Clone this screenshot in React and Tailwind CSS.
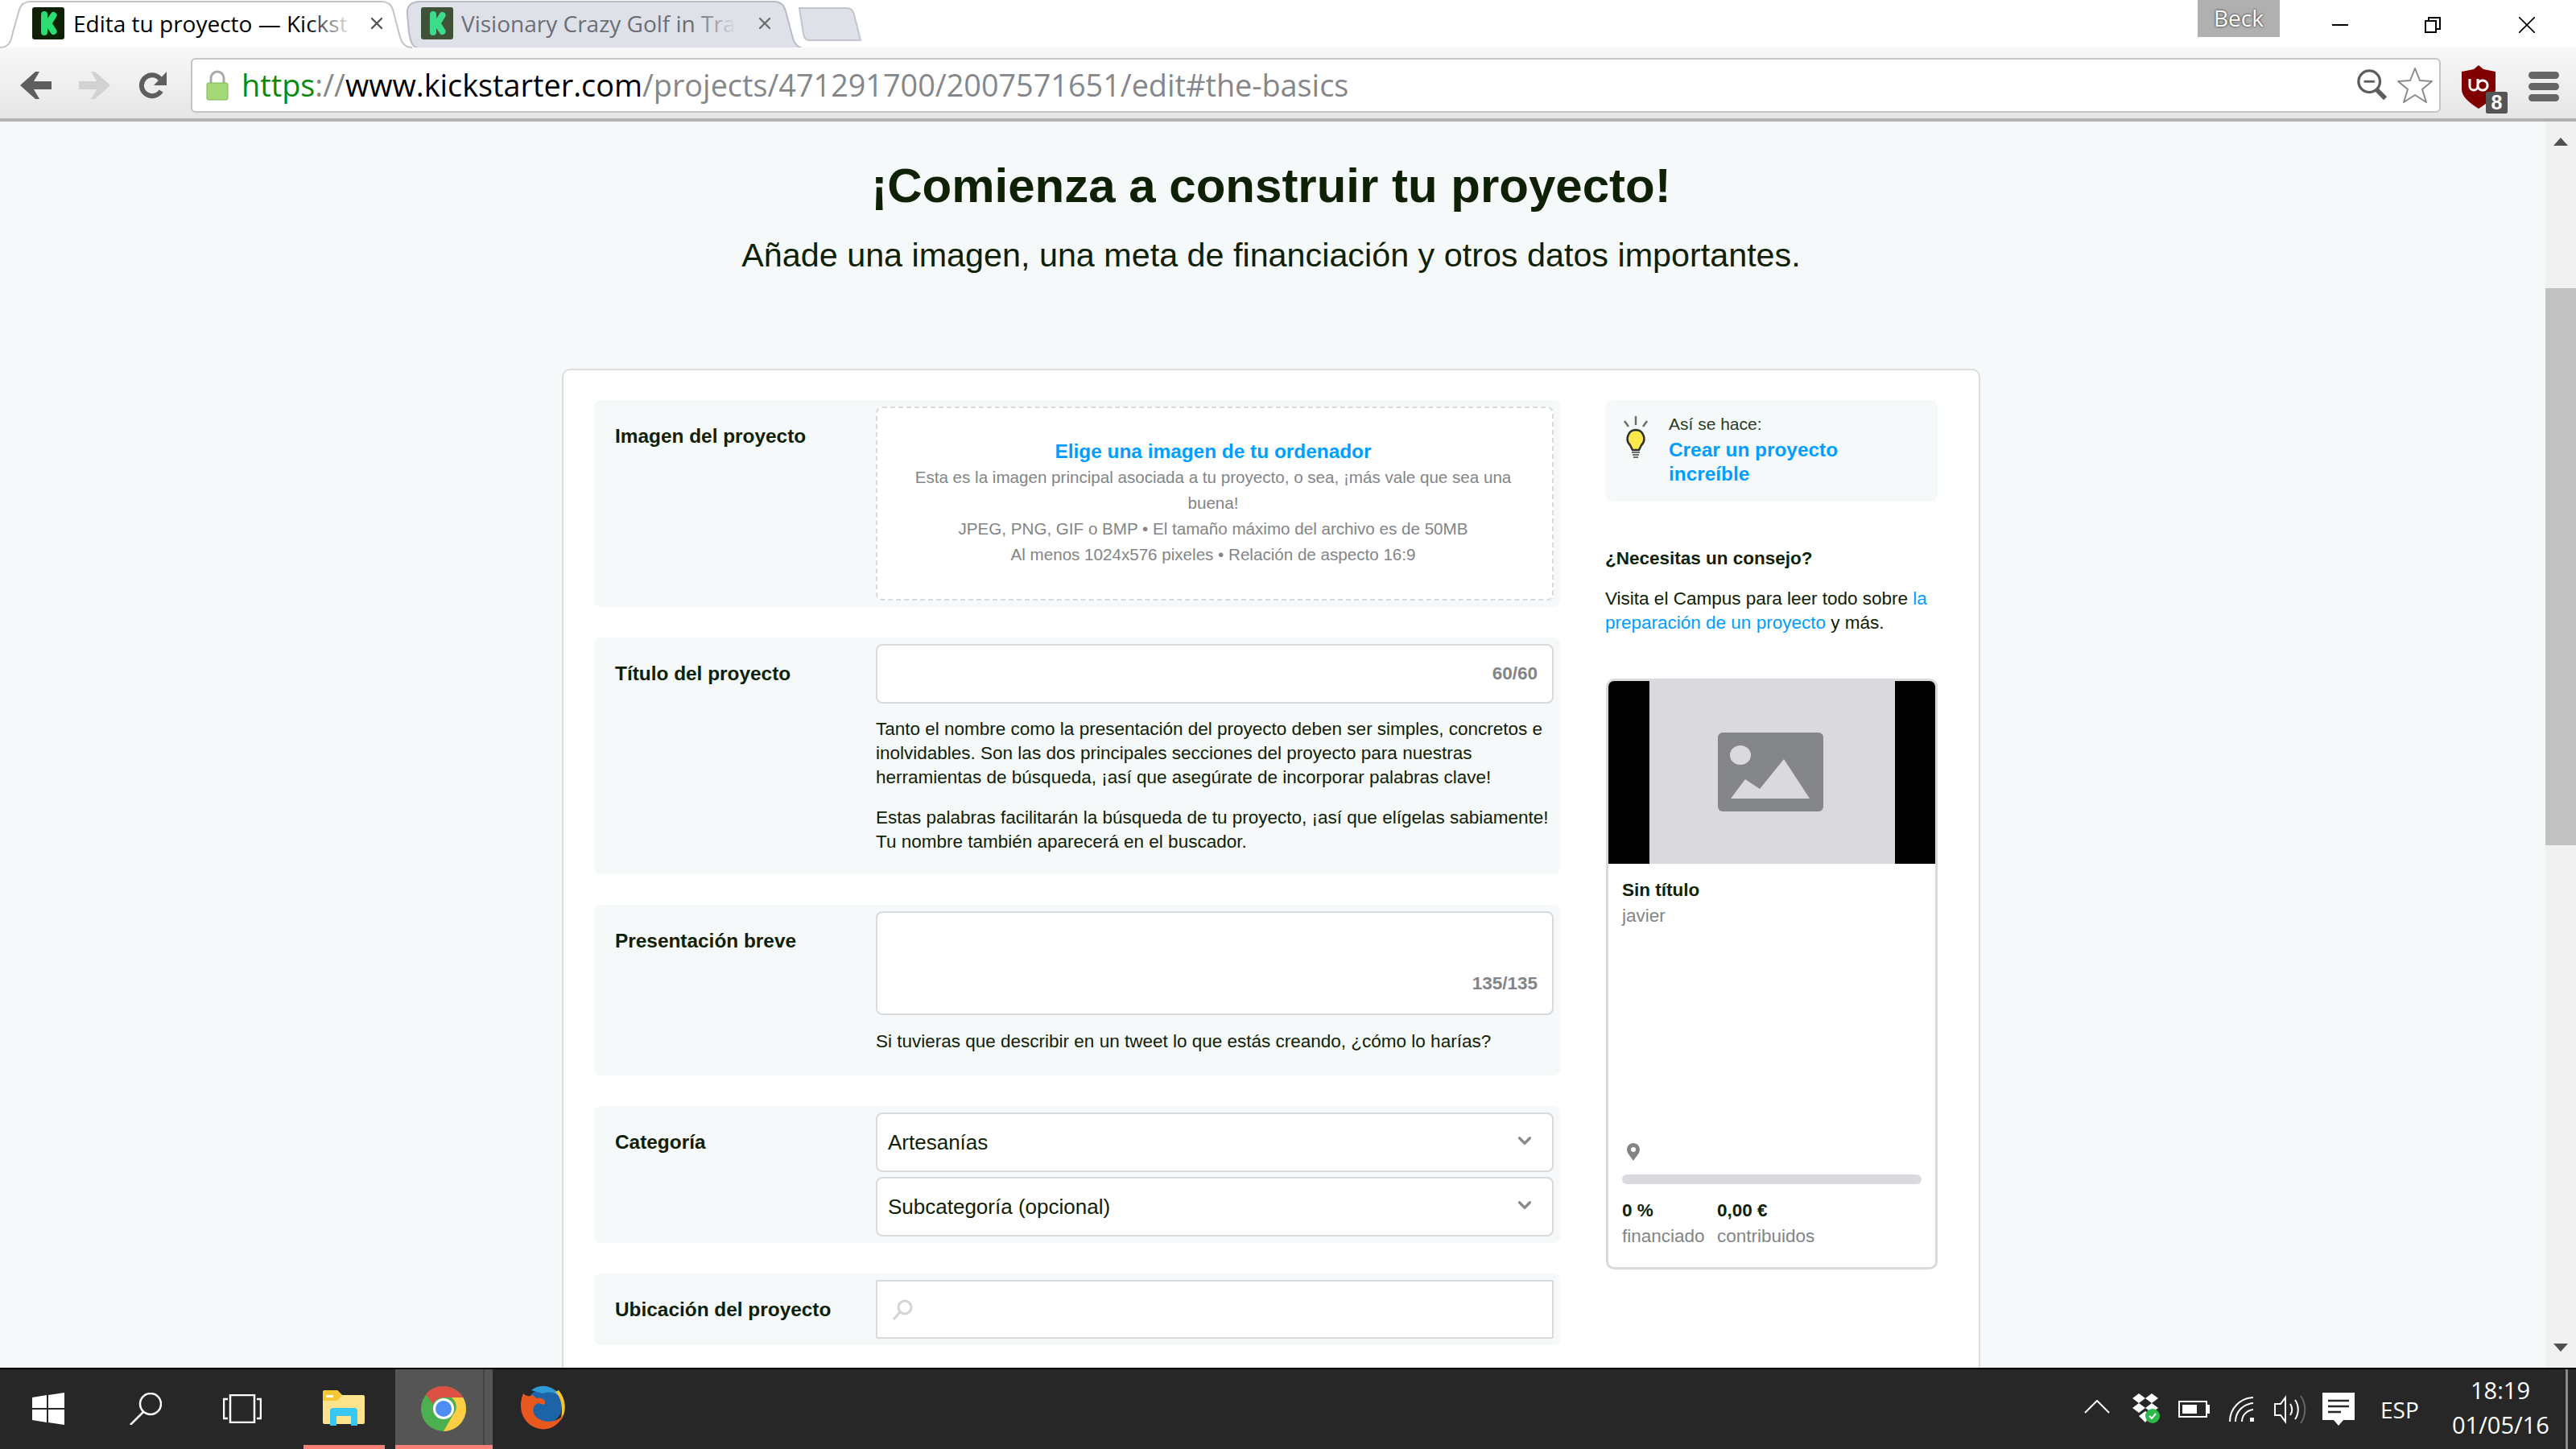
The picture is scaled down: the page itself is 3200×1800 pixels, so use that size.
import { ChevronDown, X } from 'lucide-react'

const INK = 'text-[#0f2105]'

function KLogo({ dim }) {
  return (
    <svg viewBox="0 0 40 40" className="w-10 h-10 shrink-0">
      <rect width="40" height="40" rx="3" fill={dim ? '#3f5238' : '#0f2105'} />
      <path d="M11 9 a4 4 0 0 1 8 0 v5 l4-6 a4 4 0 0 1 7 4 l-5 8 5 8 a4 4 0 0 1-7 4 l-4-6 v5 a4 4 0 0 1-8 0z" fill={dim ? '#3ddc8c' : '#2bde73'} />
    </svg>
  )
}

function TabBar() {
  return (
    <div className="flex h-[60px] shrink-0 bg-white relative">
      <div className="relative w-[512px] h-[60px] shrink-0 z-10">
        <svg viewBox="0 0 512 60" className="absolute inset-0 w-full h-full">
          <path d="M0 59 C12 59 14 50 16 40 L24 12 C26 5 30 2 38 2 L474 2 C482 2 486 5 488 12 L497 46 C499 54 503 59 512 59" fill="#fff" stroke="#c4c4c4" strokeWidth="2" />
        </svg>
        <div className="relative flex items-center h-full pl-10 pb-[2px]">
          <KLogo />
          <div className="relative ml-[11px] w-[348px] overflow-hidden whitespace-nowrap font-['Open_Sans',sans-serif] text-[28px] leading-[40px] text-black">
            Edita tu proyecto — Kickst
            <div className="absolute right-0 top-0 h-full w-[60px] bg-gradient-to-r from-transparent to-white" />
          </div>
          <X className="ml-[17px] text-[#555]" size={24} strokeWidth={2.4} />
        </div>
      </div>
      <div className="relative w-[494px] h-[60px] -ml-[8px] shrink-0">
        <svg viewBox="0 0 494 60" className="absolute inset-0 w-full h-full">
          <path d="M18 60 C8 60 6 52 4 40 L2 18 C1 8 6 2 18 2 L458 2 C466 2 470 6 472 14 L480 44 C482 54 486 59 494 60 Z" fill="#dee1e8" stroke="#b8bcc6" strokeWidth="2" />
        </svg>
        <div className="relative flex items-center h-full pl-[19px] pb-[2px]">
          <KLogo dim />
          <div className="relative ml-[10px] w-[342px] overflow-hidden whitespace-nowrap font-['Open_Sans',sans-serif] text-[28px] leading-[40px] text-[#6b6e75]">
            Visionary Crazy Golf in Tra
            <div className="absolute right-0 top-0 h-full w-[50px] bg-gradient-to-r from-transparent to-[#dee1e8]" />
          </div>
          <X className="ml-[23px] text-[#6d6d6d]" size={24} strokeWidth={2.4} />
        </div>
      </div>
      <svg viewBox="0 0 80 44" className="w-[80px] h-[44px] mt-[8px] -ml-[7px]">
        <path d="M2 2 L60 2 C66 2 68 4 70 10 L78 42 L14 42 C10 42 8 40 7 34z" fill="#dee1e8" stroke="#c2c5cd" strokeWidth="2" />
      </svg>
      <div className="flex-1" />
      <div className="w-[102px] h-[46px] pb-[3px] bg-[#b0b0b0] flex items-center justify-center text-white font-['Open_Sans',sans-serif] font-medium text-[28px] [text-shadow:0_0_3px_#111]">Beck</div>
      <div className="w-[368px] flex items-start pt-[21px] pl-[65px]">
        <div className="w-5 h-5 flex items-center"><div className="w-5 h-[2px] bg-black" /></div>
        <svg viewBox="0 0 20 20" className="w-5 h-5 ml-[95px]" fill="none" stroke="#000" strokeWidth="2">
          <rect x="1" y="5" width="13" height="14" />
          <path d="M5 5 V1 H19 V15 H14" />
        </svg>
        <svg viewBox="0 0 20 20" className="w-5 h-5 ml-[97px]" fill="none" stroke="#000" strokeWidth="1.6">
          <path d="M0 0 L20 20 M20 0 L0 20" />
        </svg>
      </div>
    </div>
  )
}

function Toolbar() {
  return (
    <div className="h-[92px] shrink-0 flex items-center pt-[5px] bg-gradient-to-b from-[#f8f8f8] to-[#e6e6e6] border-b-[4px] border-[#b2b2b2] -mt-[1px] relative">
      <svg viewBox="0 0 40 36" className="w-10 h-9 ml-[25px]" fill="#5e5e5e">
        <path d="M19 1 L0 18 19 35 24 35 17 23 H39 V13 H17 L24 1z" />
      </svg>
      <svg viewBox="0 0 40 36" className="w-10 h-9 ml-[32px]" fill="#d2d2d2">
        <path d="M21 1 L40 18 21 35 16 35 23 23 H1 V13 H23 L16 1z" />
      </svg>
      <svg viewBox="0 0 36 34" className="w-9 h-[34px] ml-[35px]" fill="none">
        <path d="M28 24 A13 13 0 1 1 27 9" stroke="#5e5e5e" strokeWidth="6" />
        <path d="M35 0 V17 H19z" fill="#5e5e5e" />
      </svg>
      <div className="ml-[29px] w-[796px] flex-1 h-[68px] mr-[168px] bg-white border-2 border-[#c4c4c4] rounded-[6px] flex items-center">
        <svg viewBox="0 0 28 38" className="w-7 h-[38px] ml-[17px] shrink-0">
          <path d="M6 17 V10 a8 8 0 0 1 16 0 V17" fill="none" stroke="#a9a9a9" strokeWidth="3" />
          <rect x="1" y="16" width="26" height="21" rx="2" fill="#a5d978" stroke="#7fb553" />
        </svg>
        <div className="ml-[16px] whitespace-nowrap font-['Open_Sans',sans-serif] text-[37.8px] leading-[50px] text-[#85878a]">
          <span className="text-[#0a8a0a]">https</span>://<span className="text-black">www.kickstarter.com</span>/projects/471291700/2007571651/edit#the-basics
        </div>
        <div className="flex-1" />
        <svg viewBox="0 0 40 42" className="w-[38px] h-10 mr-[11px]" fill="none" stroke="#5d5d5d">
          <circle cx="16" cy="16" r="14" strokeWidth="3.5" />
          <path d="M9 16 H23" strokeWidth="3" />
          <path d="M26 27 L37 38" strokeWidth="6" />
        </svg>
        <svg viewBox="0 0 46 46" className="w-[46px] h-[46px] mr-[7px]" fill="#fff" stroke="#8a8a8a" strokeWidth="2">
          <path d="M23 2 L29 17 44 18 32 28 37 44 23 35 9 44 14 28 2 18 17 17z" strokeLinejoin="round" />
        </svg>
      </div>
      <div className="absolute left-[3058px] top-[22px] w-[58px] h-[60px]">
        <svg viewBox="0 0 42 54" className="w-[42px] h-[54px]">
          <path d="M21 0 L27 5 L42 8 V30 C42 40 30 48 21 54 C12 48 0 40 0 30 V8 L15 5z" fill="#800000" />
          <path d="M10 17 V26 a5 5 0 0 0 10 0 V17 M20 26 a6 6 0 1 0 12 -2 a6 6 0 1 0 -12 2" fill="none" stroke="#fff" strokeWidth="3" />
        </svg>
        <div className="absolute left-[30px] top-[33px] w-[27px] h-[27px] rounded-[2px] bg-[#555] text-white font-['Liberation_Sans',sans-serif] font-bold text-[25px] leading-[27px] text-center">8</div>
      </div>
      <div className="absolute left-[3141px] top-[30px] w-[38px] flex flex-col gap-[5px]">
        <div className="h-[9px] rounded-full bg-[#666]" />
        <div className="h-[9px] rounded-full bg-[#666]" />
        <div className="h-[9px] rounded-full bg-[#666]" />
      </div>
    </div>
  )
}

function Row({ label, children }) {
  return (
    <div className="flex bg-[#f6f9fa] rounded-[8px]">
      <div className={`w-[350px] shrink-0 pl-[26px] pt-[30px] font-bold text-[24.4px] leading-[30px] ${INK}`}>{label}</div>
      <div className="w-[842px] pt-2 pb-2">{children}</div>
    </div>
  )
}

function Box({ className, children }) {
  return (
    <div className={`bg-white border-2 border-[#d9d9de] rounded-[8px] ${className}`}>{children}</div>
  )
}

function Form() {
  return (
    <div className="w-[1200px] shrink-0 flex flex-col gap-[38px]">
      <Row label="Imagen del proyecto">
        <div className="h-[241px] bg-white border-2 border-dashed border-[#d9d9de] rounded-[8px] flex flex-col justify-center items-center text-center pl-[38px] pr-[42px] pb-[1px]">
          <div className="font-bold text-[24.4px] leading-[32px] text-[#009eff]">Elige una imagen de tu ordenador</div>
          <div className="text-[20.6px] leading-[32px] text-[#828587]">
            <p>Esta es la imagen principal asociada a tu proyecto, o sea, ¡más vale que sea una buena!</p>
            <p>JPEG, PNG, GIF o BMP • El tamaño máximo del archivo es de 50MB</p>
            <p>Al menos 1024x576 pixeles • Relación de aspecto 16:9</p>
          </div>
        </div>
      </Row>
      <Row label="Título del proyecto">
        <Box className="h-[74px] flex items-center justify-end pr-[18px]">
          <span className="font-bold text-[22.5px] text-[#828587]">60/60</span>
        </Box>
        <div className={`mt-[17px] pb-[17px] text-[22.5px] leading-[30px] ${INK}`}>
          <p>Tanto el nombre como la presentación del proyecto deben ser simples, concretos e inolvidables. Son las dos principales secciones del proyecto para nuestras herramientas de búsqueda, ¡así que asegúrate de incorporar palabras clave!</p>
          <p className="mt-[20px]">Estas palabras facilitarán la búsqueda de tu proyecto, ¡así que elígelas sabiamente! Tu nombre también aparecerá en el buscador.</p>
        </div>
      </Row>
      <Row label="Presentación breve">
        <Box className="h-[129px] flex items-end justify-end pr-[18px] pb-[22px]">
          <span className="font-bold text-[22.5px] leading-[30px] text-[#828587]">135/135</span>
        </Box>
        <div className={`mt-[18px] pb-[19px] text-[22.5px] leading-[30px] ${INK}`}>Si tuvieras que describir en un tweet lo que estás creando, ¿cómo lo harías?</div>
      </Row>
      <Row label="Categoría">
        <Box className="h-[74px] flex items-center justify-between pl-[13px] pr-[21px]">
          <span className={`text-[26px] ${INK}`}>Artesanías</span>
          <ChevronDown className="text-[#8b8b8b] -mt-[4px]" size={26} strokeWidth={3} />
        </Box>
        <Box className="h-[74px] mt-[6px] flex items-center justify-between pl-[13px] pr-[21px]">
          <span className={`text-[26px] ${INK}`}>Subcategoría (opcional)</span>
          <ChevronDown className="text-[#8b8b8b] -mt-[4px]" size={26} strokeWidth={3} />
        </Box>
      </Row>
      <Row label="Ubicación del proyecto">
        <div className="h-[73px] bg-white border-2 border-[#d9d9de] rounded-[2px] flex items-center pl-[18px]">
          <svg viewBox="0 0 26 26" className="w-[26px] h-[26px]" fill="none" stroke="#d4d4d8" strokeWidth="3">
            <circle cx="16" cy="10" r="8" />
            <path d="M10 16 L2 25" />
          </svg>
        </div>
      </Row>
    </div>
  )
}

function Bulb() {
  return (
    <svg viewBox="0 0 32 52" className="w-8 h-[52px] shrink-0 mt-[20px] ml-[21px]">
      <path d="M16 0 V11 M2 6 L7 13 M30 6 L25 13" stroke="#6e6e6e" strokeWidth="2.5" fill="none" />
      <path d="M16 17 a10.5 11 0 0 0 -7 19 l3 6 h8 l3 -6 a10.5 11 0 0 0 -7 -19z" fill="#fbe84a" stroke="#2f2f2f" strokeWidth="2.5" />
      <path d="M11 45 H21 M12 48 H20 M13 51 H19" stroke="#6e6e6e" strokeWidth="2" />
    </svg>
  )
}

function PreviewCard() {
  return (
    <div className="mt-[54px] h-[734px] border-[3px] border-[#d9d9de] rounded-[10px] flex flex-col overflow-hidden">
      <div className="h-[227px] shrink-0 bg-black flex justify-center">
        <div className="w-[305px] bg-[#d9d9de] flex items-center justify-center pb-[2px] pr-[4px]">
          <svg viewBox="0 0 131 98" className="w-[131px] h-[98px]">
            <rect width="131" height="98" rx="6" fill="#85868a" />
            <ellipse cx="28" cy="28" rx="13" ry="12" fill="#d9d9de" />
            <path d="M16 82 L34 58 52 70 82 33 114 82z" fill="#d9d9de" />
          </svg>
        </div>
      </div>
      <div className="flex-1 flex flex-col px-[17px]">
        <div className={`mt-[18px] font-bold text-[22.5px] leading-[30px] ${INK}`}>Sin título</div>
        <div className="mt-[2px] text-[22.5px] leading-[30px] text-[#828587]">javier</div>
        <svg viewBox="0 0 16 22" className="w-4 h-[22px] mt-[267px] ml-[6px]" fill="#828587">
          <path fillRule="evenodd" d="M8 0 a8 8 0 0 1 8 8 c0 5 -5 9 -8 14 c-3 -5 -8 -9 -8 -14 a8 8 0 0 1 8 -8z M8 5 a3 3 0 1 0 0 6 a3 3 0 1 0 0 -6z" />
        </svg>
        <div className="mt-[17px] h-3 rounded-full bg-[#d9d9de]" />
        <div className="mt-[18px] flex gap-[16px] text-[22.5px] leading-[30px]">
          <div className="w-[102px]">
            <div className={`font-bold ${INK}`}>0 %</div>
            <div className="mt-[2px] whitespace-nowrap text-[#828587]">financiado</div>
          </div>
          <div>
            <div className={`font-bold ${INK}`}>0,00 €</div>
            <div className="mt-[2px] text-[#828587]">contribuidos</div>
          </div>
        </div>
      </div>
    </div>
  )
}

function Sidebar() {
  return (
    <div className="w-[412px] ml-[57px] shrink-0">
      <div className="h-[126px] bg-[#f6f9fa] rounded-[8px] flex">
        <Bulb />
        <div className="ml-[25px] pt-[15px] w-[260px]">
          <div className="text-[21px] leading-[30px] text-[#2c3b28]">Así se hace:</div>
          <div className="mt-[2px] font-bold text-[24.4px] leading-[30px] text-[#009eff]">Crear un proyecto increíble</div>
        </div>
      </div>
      <div className={`mt-[56px] -ml-[1px] font-bold text-[22.5px] leading-[30px] ${INK}`}>¿Necesitas un consejo?</div>
      <p className={`mt-[20px] -ml-[1px] text-[22.5px] leading-[30px] ${INK}`}>
        Visita el Campus para leer todo sobre <span className="text-[#009eff]">la preparación de un proyecto</span> y más.
      </p>
      <PreviewCard />
    </div>
  )
}

function Scrollbar() {
  return (
    <div className="w-[38px] shrink-0 bg-[#f1f1f1] flex flex-col items-center">
      <div className="h-[50px] shrink-0 flex items-center justify-center w-full">
        <div className="w-0 h-0 border-x-[9px] border-x-transparent border-b-[10px] border-b-[#505050]" />
      </div>
      <div className="mt-[157px] w-full h-[692px] bg-[#c1c1c1]" />
      <div className="flex-1" />
      <div className="h-[50px] shrink-0 flex items-center justify-center w-full">
        <div className="w-0 h-0 border-x-[9px] border-x-transparent border-t-[10px] border-t-[#505050]" />
      </div>
    </div>
  )
}

function Page() {
  return (
    <div className="flex-1 min-h-0 flex bg-[#f6f9fa] overflow-hidden">
      <div className="w-[3162px] shrink-0">
        <div className="ml-[698px] w-[1762px]">
          <h1 className={`pt-[50px] text-center font-bold text-[60px] leading-[60px] ${INK}`}>¡Comienza a construir tu proyecto!</h1>
          <p className={`mt-[31px] text-center text-[41.3px] leading-[50px] ${INK}`}>Añade una imagen, una meta de financiación y otros datos importantes.</p>
          <div className="mt-[116px] h-[1300px] bg-white border-2 border-[#dcdde0] rounded-[10px] pt-[37px] pl-[38px] flex">
            <Form />
            <Sidebar />
          </div>
        </div>
      </div>
      <Scrollbar />
    </div>
  )
}

function Taskbar() {
  return (
    <div className="h-[101px] shrink-0 bg-[#272727] border-t-2 border-black flex relative z-10 text-white font-['Open_Sans',sans-serif]">
      <svg viewBox="0 0 40 40" className="w-10 h-10 ml-[40px] mt-[29px]" fill="#fff">
        <path d="M0 6 L18 3 V19 H0z M20 3 L40 0 V19 H20z M0 21 H18 V37 L0 34z M20 21 H40 V40 L20 37z" />
      </svg>
      <svg viewBox="0 0 40 40" className="w-10 h-10 ml-[81px] mt-[29px]" fill="none" stroke="#fff" strokeWidth="2.5">
        <ellipse cx="26" cy="14" rx="13" ry="13" />
        <path d="M17 24 L1 40" />
      </svg>
      <svg viewBox="0 0 48 36" className="w-12 h-9 ml-[76px] mt-[31px]" fill="none" stroke="#fff" strokeWidth="2.5">
        <rect x="9" y="1" width="30" height="34" />
        <path d="M6 6 H1 V30 H6 M42 6 H47 V30 H42" />
      </svg>
      <div className="relative w-[101px] ml-[52px] h-full">
        <svg viewBox="0 0 52 44" className="absolute left-[24px] top-[26px] w-[52px] h-[44px]">
          <path d="M0 3 a3 3 0 0 1 3 -3 H18 L24 6 H50 a2 2 0 0 1 2 2 V40 a2 2 0 0 1 -2 2 H2 a2 2 0 0 1 -2 -2z" fill="#fde38c" />
          <path d="M0 3 a3 3 0 0 1 3 -3 H18 L24 6 L18 13 H0z" fill="#f7c736" />
          <rect x="4" y="6" width="9" height="3" fill="#fff" />
          <path d="M9 44 V26 a4 4 0 0 1 4 -4 H39 a4 4 0 0 1 4 4 V44 H35 V32 H17 V44z" fill="#38c6f4" />
        </svg>
        <div className="absolute left-0 right-0 bottom-0 h-[5px] bg-[#f98078]" />
      </div>
      <div className="relative w-[121px] ml-[13px] h-full bg-[#555555]">
        <svg viewBox="0 0 56 56" className="absolute left-[32px] top-[21px] w-14 h-14">
          <circle cx="28" cy="28" r="28" fill="#4caf50" />
          <path d="M28 0 A28 28 0 0 1 52.2 14 L28 14 A14 14 0 0 0 15 22 L6 10 A28 28 0 0 1 28 0z" fill="#dd5044" />
          <path d="M52.2 14 A28 28 0 0 1 28 56 L40 35 A14 14 0 0 0 38 14z" fill="#fdce43" />
          <circle cx="28" cy="28" r="13" fill="#fff" />
          <circle cx="28" cy="28" r="10" fill="#4d8cf5" />
        </svg>
        <div className="absolute right-[10px] top-0 bottom-0 w-[2px] bg-[#444]" />
        <div className="absolute left-0 right-0 bottom-0 h-[5px] bg-[#f98078]" />
      </div>
      <svg viewBox="0 0 57 56" className="w-[57px] h-14 ml-[34px] mt-[20px]">
        <circle cx="30" cy="26" r="22" fill="#1c63a8" />
        <path d="M14 6 C26 -4 48 0 54 22 C50 10 38 6 28 10z" fill="#2d9ad6" />
        <path d="M48 6 C58 18 58 34 50 44 C54 30 52 16 44 8z" fill="#f9c630" />
        <path d="M4 10 C-2 24 0 44 18 52 C34 59 50 50 55 34 C50 44 36 48 24 42 C14 36 14 26 22 22 L30 24 C34 18 26 14 20 16 L16 12 C12 14 8 14 4 10z" fill="#e8581f" />
      </svg>

      <div className="flex-1" />

      <svg viewBox="0 0 32 17" className="w-8 h-[17px] mt-[38px]" fill="none" stroke="#fff" strokeWidth="2">
        <path d="M1 16 L16 1 31 16" />
      </svg>
      <svg viewBox="0 0 38 38" className="w-[38px] h-[38px] ml-[26px] mt-[30px]">
        <path d="M10 0 L18 6 10 12 2 6z M26 0 L34 6 26 12 18 6z M10 12 L18 18 10 24 2 18z M26 12 L34 18 26 24 18 18z M18 22 L25 27 18 36 10 28z" fill="#fff" />
        <circle cx="27" cy="28" r="9" fill="#2db84a" />
        <path d="M23 28 L26 31 31 25" stroke="#fff" strokeWidth="2" fill="none" />
      </svg>
      <div className="ml-[21px] mt-[38px] flex items-center h-[23px]">
        <div className="w-[36px] h-[21px] border-2 border-white p-[3px]"><div className="w-[18px] h-full bg-white" /></div>
        <div className="w-[3px] h-[11px] bg-white" />
      </div>
      <svg viewBox="0 0 32 32" className="w-8 h-8 ml-[24px] mt-[34px]" fill="none" stroke="#fff" strokeWidth="2">
        <path d="M1 31 C1 14 14 2 30 1 M8 31 C8 18 18 9 30 8 M16 31 C16 23 22 17 30 16" />
        <rect x="26" y="26" width="5" height="5" fill="#fff" stroke="none" />
      </svg>
      <svg viewBox="0 0 40 36" className="w-10 h-9 ml-[24px] mt-[32px]" fill="none" stroke="#fff" strokeWidth="2">
        <path d="M1 11 H8 L14 3 V33 L8 25 H1z" />
        <path d="M20 11 C23 15 23 21 20 25 M26 6 C31 13 31 23 26 30" />
        <path d="M33 1 C40 11 40 25 33 35" stroke="#666" />
      </svg>
      <svg viewBox="0 0 40 41" className="w-10 h-[41px] ml-[20px] mt-[29px]">
        <path d="M0 0 H40 V34 H26 L20 41 14 34 H0z" fill="#fff" />
        <path d="M7 10 H33 M7 17 H33 M7 24 H23" stroke="#272727" strokeWidth="2.5" />
      </svg>
      <div className="ml-[32px] mt-[31px] text-[28px] leading-[38px] w-[47px]">ESP</div>
      <div className="ml-[42px] w-[120px] text-center mt-[4px] text-[29px] leading-[43px] whitespace-nowrap">
        <div>18:19</div>
        <div>01/05/16</div>
      </div>
      <div className="ml-[21px] w-[3px] bg-[#8a8a8a]" />
      <div className="w-[10px]" />
    </div>
  )
}

export default function App() {
  return (
    <div className="w-[3200px] h-[1800px] flex flex-col overflow-hidden bg-white font-['Liberation_Sans',Arial,sans-serif]">
      <TabBar />
      <Toolbar />
      <Page />
      <Taskbar />
    </div>
  )
}
